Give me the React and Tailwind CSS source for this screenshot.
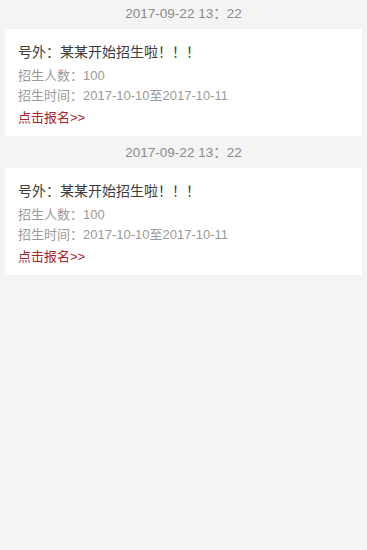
export default function App() {
  const items = [
    {
      id: 1,
      time: "2017-09-22 13：22",
      title: "号外：某某开始招生啦！！！",
      count: "100",
      range: "2017-10-10至2017-10-11",
    },
    {
      id: 2,
      time: "2017-09-22 13：22",
      title: "号外：某某开始招生啦！！！",
      count: "100",
      range: "2017-10-10至2017-10-11",
    },
  ];

  return (
    <div
      className="w-full min-h-[550px] bg-[#f4f4f4] flex flex-col gap-[3px]"
      style={{ fontFamily: '"Liberation Sans", "Noto Sans CJK SC", sans-serif' }}
    >
      {items.map((item) => (
        <div key={item.id} className="flex flex-col">
          <div className="h-[29px] flex items-center justify-center text-[13.5px] text-[#8a8a8a]">
            {item.time}
          </div>
          <div className="mx-[5px] bg-white h-[107px] pl-[13px] pt-[13px]">
            <div className="text-[14px] leading-[20px] text-[#3c3c3c]">
              {item.title}
            </div>
            <div className="mt-[4px] text-[13px] leading-[20px] text-[#9a9a9a]">
              招生人数：{item.count}
            </div>
            <div className="text-[13px] leading-[20px] text-[#9a9a9a]">
              招生时间：{item.range}
            </div>
            <div className="mt-[2px] text-[13px] leading-[20px] text-[#a8232b]">
              点击报名&gt;&gt;
            </div>
          </div>
        </div>
      ))}
    </div>
  );
}
